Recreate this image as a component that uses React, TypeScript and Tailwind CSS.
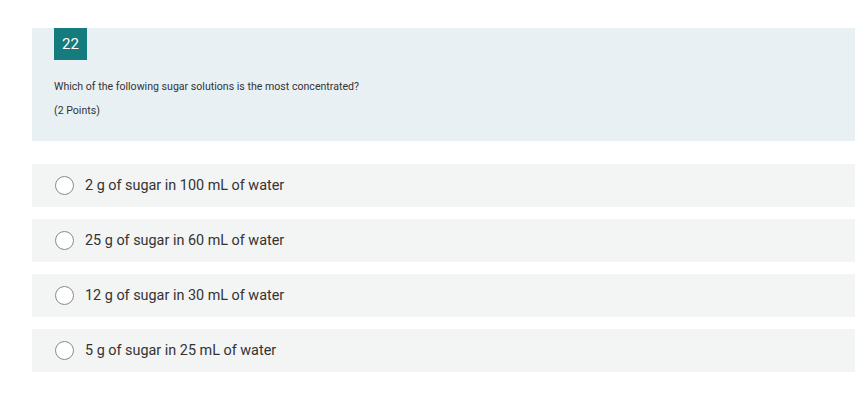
import React from 'react';

const options = [
  '2 g of sugar in 100 mL of water',
  '25 g of sugar in 60 mL of water',
  '12 g of sugar in 30 mL of water',
  '5 g of sugar in 25 mL of water',
];

const App: React.FC = () => {
  return (
    <div className="min-h-screen w-full bg-white pt-[28px] pl-[32px]" style={{ fontFamily: 'Roboto, "Liberation Sans", sans-serif' }}>
      <div className="bg-[#e8f0f3] pl-[22px] h-[113px]">
        <div className="w-[33px] h-[32px] bg-[#157b7c] text-white text-[15px] flex items-center justify-center">22</div>
        <p className="mt-[20px] text-[10.6px] leading-[14px] text-[#333]">Which of the following sugar solutions is the most concentrated?</p>
        <p className="mt-[10px] text-[10.6px] leading-[14px] text-[#333]">(2 Points)</p>
      </div>
      <div className="mt-[23px] flex flex-col gap-[12px]">
        {options.map((opt) => (
          <label key={opt} className="h-[43px] bg-[#f3f4f4] flex items-center pl-[23px]">
            <span className="w-[19px] h-[19px] rounded-full border border-[#8a8a8a] bg-white shrink-0" />
            <span className="ml-[11px] text-[14.4px] leading-[20px] pt-[1px] text-[#333]">{opt}</span>
          </label>
        ))}
      </div>
    </div>
  );
};

export default App;
